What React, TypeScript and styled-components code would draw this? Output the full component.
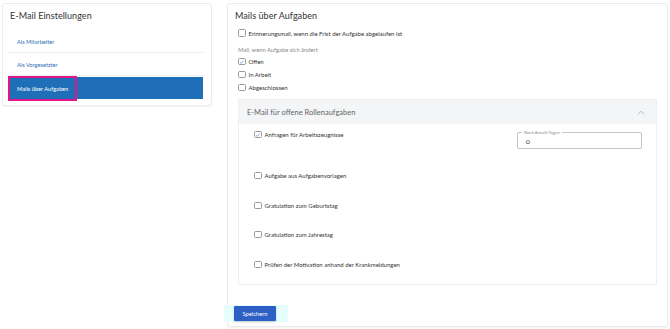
import React from "react";
import styled, { createGlobalStyle } from "styled-components";

const Global = createGlobalStyle`
  html, body { margin: 0; padding: 0; background: #ffffff; }
  body { font-family: "Lato", "Noto Sans", sans-serif; color: #333; }
  * { box-sizing: border-box; }
`;

const Page = styled.div`
  display: flex;
  align-items: flex-start;
  gap: 15px;
  padding: 3px 0 0 2px;
  width: 670px;
  height: 329px;
`;

const Card = styled.div<{ $w: number; $h: number }>`
  width: ${(p) => p.$w}px;
  height: ${(p) => p.$h}px;
  background: #fff;
  border: 1px solid #ebebeb;
  border-radius: 3px;
  box-shadow: 0 1px 2px rgba(0, 0, 0, 0.05);
`;

const SideCard = styled(Card)`
  padding: 6px 8px 0 6px;
`;

const Title = styled.div<{ $h: number; $indent?: number }>`
  font-size: 9px;
  color: #333;
  height: ${(p) => p.$h}px;
  line-height: 12px;
  margin-left: ${(p) => p.$indent ?? 0}px;
  letter-spacing: 0.05px;
`;

const NavItem = styled.div<{ $active?: boolean }>`
  position: relative;
  height: ${(p) => (p.$active ? 22 : 23)}px;
  margin-top: ${(p) => (p.$active ? 1 : 0)}px;
  display: flex;
  align-items: center;
  padding-left: 8px;
  font-size: 5.7px;
  color: ${(p) => (p.$active ? "#ffffff" : "#2f6fb5")};
  background: ${(p) => (p.$active ? "#1e6fb8" : "transparent")};
  border-bottom: ${(p) => (p.$active ? "none" : "1px solid #ececec")};
`;

const Highlight = styled.div`
  position: absolute;
  left: -1px;
  top: -1px;
  width: 69px;
  height: 25px;
  border: 2px solid #e0168a;
`;

const MainCard = styled(Card)`
  padding: 6px 10px 0 10px;
  display: flex;
  flex-direction: column;
`;

const CheckRow = styled.label<{ $h?: number }>`
  display: flex;
  align-items: center;
  gap: 3px;
  height: ${(p) => p.$h ?? 13}px;
  font-size: 6px;
  color: #333;
`;

const Box = styled.span`
  width: 7.5px;
  height: 7.5px;
  border: 1px solid #9a9a9a;
  border-radius: 1.5px;
  display: inline-flex;
  align-items: center;
  justify-content: center;
  background: #fff;
  flex: none;
`;

const SubLabel = styled.div`
  font-size: 5.8px;
  color: #8a8a8a;
  height: 16px;
  padding-top: 7px;
  line-height: 7px;
`;

const Accordion = styled.div`
  margin-top: 5px;
  border: 1px solid #f0f0f0;
  display: flex;
  flex-direction: column;
`;

const AccHeader = styled.div`
  height: 24px;
  background: #f4f5f7;
  display: flex;
  align-items: center;
  justify-content: space-between;
  padding: 0 11px 0 8px;
  font-size: 7.5px;
  color: #666;
`;

const AccBody = styled.div`
  padding: 4px 14px 13px 15px;
  display: flex;
  flex-direction: column;
`;

const OptionRow = styled.div<{ $h: number }>`
  display: flex;
  justify-content: space-between;
  align-items: flex-start;
  height: ${(p) => p.$h}px;
`;

const Field = styled.div`
  position: relative;
  width: 125px;
  height: 17px;
  margin-top: 4px;
  border: 1px solid #c4c4c4;
  border-radius: 2px;
  padding: 0 8px;
  display: flex;
  align-items: center;
`;

const FieldLabel = styled.span`
  position: absolute;
  left: 4px;
  top: -3px;
  padding: 0 2px;
  background: #fff;
  font-size: 4.3px;
  line-height: 5px;
  color: #888;
`;

const FieldValue = styled.span`
  font-size: 6.5px;
  color: #333;
  margin-top: 2px;
`;

const Footer = styled.div`
  margin-top: 20px;
  margin-left: -14px;
  width: 64px;
  height: 17px;
  background: #e6fdfd;
  display: flex;
  align-items: center;
  padding-left: 10px;
`;

const Button = styled.button`
  width: 42px;
  height: 15px;
  border: none;
  border-radius: 1px;
  background: #2d5fc4;
  color: #fff;
  font-size: 5.8px;
  font-family: inherit;
  padding: 0;
  box-shadow: 0 1px 2px rgba(0, 0, 0, 0.2);
`;

const Check = () => (
  <svg width="6" height="6" viewBox="0 0 10 10">
    <path d="M1.8 5.3 L4.2 7.6 L8.4 2.4" fill="none" stroke="#4a86c8" strokeWidth="1.2" />
  </svg>
);

const CB = ({ checked }: { checked?: boolean }) => <Box>{checked && <Check />}</Box>;

const Chevron = () => (
  <svg width="8" height="5" viewBox="0 0 8 5">
    <path d="M0.8 4.3 L4 1.2 L7.2 4.3" fill="none" stroke="#b5b5b5" strokeWidth="0.9" />
  </svg>
);

export default function App() {
  return (
    <>
      <Global />
      <Page>
        <SideCard $w={210} $h={103}>
          <Title $h={20} $indent={1}>E-Mail Einstellungen</Title>
          <NavItem>Als Mitarbeiter</NavItem>
          <NavItem>Als Vorgesetzter</NavItem>
          <NavItem $active>
            <Highlight />
            Mails über Aufgaben
          </NavItem>
        </SideCard>
        <MainCard $w={441} $h={324}>
          <Title $h={17} $indent={-3}>Mails über Aufgaben</Title>
          <CheckRow $h={12}>
            <CB />
            Erinnerungsmail, wenn die Frist der Aufgabe abgelaufen ist
          </CheckRow>
          <SubLabel>Mail, wenn Aufgabe sich ändert</SubLabel>
          <CheckRow>
            <CB checked />
            Offen
          </CheckRow>
          <CheckRow>
            <CB />
            In Arbeit
          </CheckRow>
          <CheckRow>
            <CB />
            Abgeschlossen
          </CheckRow>
          <Accordion>
            <AccHeader>
              E-Mail für offene Rollenaufgaben
              <Chevron />
            </AccHeader>
            <AccBody>
              <OptionRow $h={41}>
                <CheckRow>
                  <CB checked />
                  Anfragen für Arbeitszeugnisse
                </CheckRow>
                <Field>
                  <FieldLabel>Nach Anzahl Tagen</FieldLabel>
                  <FieldValue>0</FieldValue>
                </Field>
              </OptionRow>
              <OptionRow $h={30}>
                <CheckRow>
                  <CB />
                  Aufgabe aus Aufgabenvorlagen
                </CheckRow>
              </OptionRow>
              <OptionRow $h={29}>
                <CheckRow>
                  <CB />
                  Gratulation zum Geburtstag
                </CheckRow>
              </OptionRow>
              <OptionRow $h={30}>
                <CheckRow>
                  <CB />
                  Gratulation zum Jahrestag
                </CheckRow>
              </OptionRow>
              <OptionRow $h={13}>
                <CheckRow>
                  <CB />
                  Prüfen der Motivation anhand der Krankmeldungen
                </CheckRow>
              </OptionRow>
            </AccBody>
          </Accordion>
          <Footer>
            <Button>Speichern</Button>
          </Footer>
        </MainCard>
      </Page>
    </>
  );
}
